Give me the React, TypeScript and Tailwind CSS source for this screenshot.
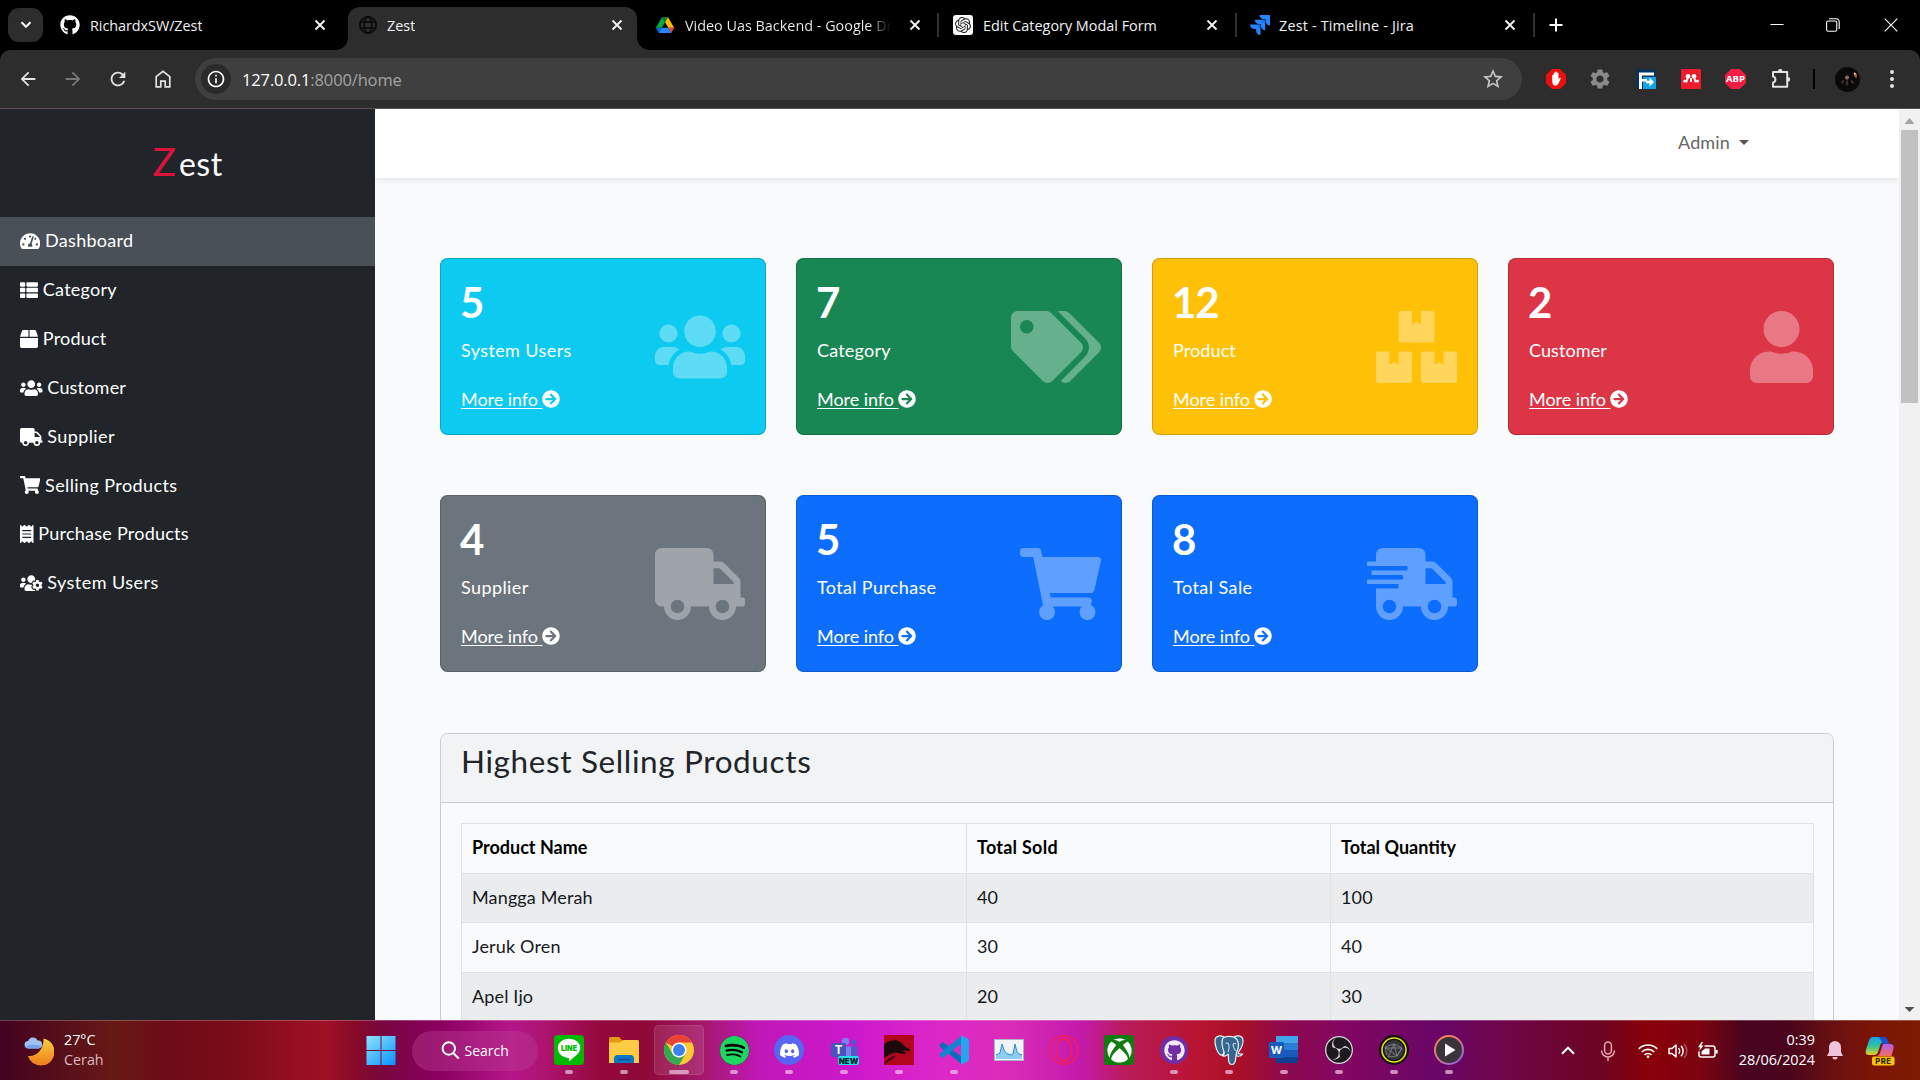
import type { ReactNode } from "react";
import type { IconType } from "react-icons";
import {
  FaArrowCircleRight,
  FaBox,
  FaBoxes,
  FaGithub,
  FaReceipt,
  FaShippingFast,
  FaShoppingCart,
  FaTachometerAlt,
  FaTags,
  FaThList,
  FaTruck,
  FaUser,
  FaUsers,
  FaUsersCog,
  FaXbox,
} from "react-icons/fa";
import {
  MdArrowBack,
  MdArrowForward,
  MdInfoOutline,
  MdRefresh,
  MdSettings,
  MdStarOutline,
} from "react-icons/md";
import { SiDiscord, SiObsstudio, SiOpenai, SiSpotify } from "react-icons/si";

/* ---------- Browser chrome ---------- */

function CloseX({ className }: { className: string }) {
  return (
    <svg viewBox="0 0 14 14" className={`h-[14px] w-[14px] shrink-0 ${className}`}>
      <path d="M2.5 2.5l9 9M11.5 2.5l-9 9" stroke="#f2f2f2" strokeWidth="1.9" fill="none" />
    </svg>
  );
}

function DriveIcon() {
  return (
    <svg viewBox="0 0 87.3 78" className="h-4 w-[18px] shrink-0">
      <path fill="#0066da" d="m6.6 66.85 3.85 6.65c.8 1.4 1.95 2.5 3.3 3.3l13.75-23.8h-27.5c0 1.55.4 3.1 1.2 4.5z" />
      <path fill="#00ac47" d="m43.65 25-13.75-23.8c-1.35.8-2.5 1.9-3.3 3.3l-25.4 44a9.06 9.06 0 0 0 -1.2 4.5h27.5z" />
      <path fill="#ea4335" d="m73.55 76.8c1.35-.8 2.5-1.9 3.3-3.3l1.6-2.75 7.65-13.25c.8-1.4 1.2-2.95 1.2-4.5h-27.502l5.852 11.5z" />
      <path fill="#00832d" d="m43.65 25 13.75-23.8c-1.35-.8-2.9-1.2-4.5-1.2h-18.5c-1.6 0-3.15.45-4.5 1.2z" />
      <path fill="#2684fc" d="m59.8 53h-32.3l-13.75 23.8c1.35.8 2.9 1.2 4.5 1.2h50.8c1.6 0 3.15-.45 4.5-1.2z" />
      <path fill="#ffba00" d="m73.4 26.5-12.7-22c-.8-1.4-1.95-2.5-3.3-3.3l-13.75 23.8 16.15 28h27.45c0-1.55-.4-3.1-1.2-4.5z" />
    </svg>
  );
}

function JiraIcon() {
  return (
    <svg viewBox="0 0 24 24" className="h-5 w-5 shrink-0">
      <g fill="#2684ff">
        <path d="M11.571 11.513H0a5.218 5.218 0 0 0 5.232 5.215h2.13v2.057A5.215 5.215 0 0 0 12.575 24V12.518a1.005 1.005 0 0 0-1.005-1.005z" />
        <path d="M17.294 5.757H5.736a5.215 5.215 0 0 0 5.215 5.214h2.129v2.058a5.218 5.218 0 0 0 5.215 5.214V6.758a1.001 1.001 0 0 0-1.001-1.001z" />
        <path d="M23.013 0H11.455a5.215 5.215 0 0 0 5.215 5.215h2.129v2.057A5.215 5.215 0 0 0 24 12.483V1.005A1.001 1.001 0 0 0 23.013 0Z" />
      </g>
      <path d="M8 12.5l4 4v-4zM13.5 6.8l4 4v-4z" fill="#0a5ad6" opacity=".6" />
    </svg>
  );
}

function TabTitle({ className, children }: { className: string; children: ReactNode }) {
  return <span className={`overflow-hidden pt-px whitespace-nowrap ${className}`}>{children}</span>;
}

function TabStrip() {
  return (
    <div className="flex h-[50px] items-center bg-black text-[14.4px] leading-5 text-[#f2f2f2]">
      <div className="ml-2 flex h-[34px] w-[35px] items-center justify-center rounded-[11px] bg-[#2d2d2d]">
        <svg viewBox="0 0 12 8" className="h-2 w-3">
          <path d="M1.5 1.2L6 5.8l4.5-4.6" stroke="#fff" strokeWidth="2" fill="none" />
        </svg>
      </div>
      <div className="flex w-[305px] items-center pr-[21px] pl-[17px]">
        <FaGithub className="h-5 w-5 shrink-0 text-white" />
        <TabTitle className="ml-2.5 tracking-[-0.05px]">RichardxSW/Zest</TabTitle>
        <CloseX className="ml-auto" />
      </div>
      <div className="relative flex h-[43px] w-[289px] items-center self-end rounded-t-[12px] bg-[#2d2d2d] pr-[13px] pb-[7px] pl-[11px]">
        <div className="absolute bottom-0 -left-3 h-3 w-3 bg-[radial-gradient(circle_at_0_0,#000_11.5px,#2d2d2d_12px)]" />
        <div className="absolute -right-3 bottom-0 h-3 w-3 bg-[radial-gradient(circle_at_100%_0,#000_11.5px,#2d2d2d_12px)]" />
        <svg viewBox="0 0 18 18" className="h-[18px] w-[18px] shrink-0" fill="none" stroke="#070707" strokeWidth="1.5">
          <circle cx="9" cy="9" r="8.2" />
          <ellipse cx="9" cy="9" rx="3.8" ry="8.2" />
          <path d="M1.5 6h15M1.5 12h15" />
        </svg>
        <TabTitle className="ml-2.5">Zest</TabTitle>
        <CloseX className="ml-auto" />
      </div>
      <div className="flex h-6 w-[302px] items-center border-r-2 border-[#2f2f2f] pr-[15px] pl-[19px]">
        <DriveIcon />
        <TabTitle className="ml-[11px] w-[209px] bg-linear-to-r from-[#f2f2f2] from-88% to-black bg-clip-text text-transparent">
          Video Uas Backend - Google Drive
        </TabTitle>
        <CloseX className="ml-auto" />
      </div>
      <div className="flex h-6 w-[298px] items-center border-r-2 border-[#2f2f2f] pr-[16px] pl-[14px]">
        <div className="flex h-5 w-5 shrink-0 items-center justify-center rounded-[3px] bg-white">
          <SiOpenai className="h-4 w-4 text-[#222]" />
        </div>
        <TabTitle className="ml-2.5">Edit Category Modal Form</TabTitle>
        <CloseX className="ml-auto" />
      </div>
      <div className="flex h-6 w-[298px] items-center border-r-2 border-[#2f2f2f] pr-[16px] pl-[13px]">
        <JiraIcon />
        <TabTitle className="ml-[9px] tracking-[0.18px]">Zest - Timeline - Jira</TabTitle>
        <CloseX className="ml-auto" />
      </div>
      <svg viewBox="0 0 14 14" className="ml-[14px] h-[14px] w-[14px]">
        <path d="M7 .5v13M.5 7h13" stroke="#fff" strokeWidth="2" />
      </svg>
      <div className="ml-auto flex items-center pr-[22px]">
        <svg viewBox="0 0 14 14" className="h-[14px] w-[14px]">
          <path d="M.5 6.5h13" stroke="#fff" strokeWidth="1" />
        </svg>
        <svg viewBox="0 0 14 14" className="ml-[42px] h-[14px] w-[14px]" fill="none" stroke="#fff" strokeWidth="1.1">
          <rect x=".6" y="3" width="10.2" height="10.3" rx="1.8" />
          <path d="M3 .8h7.2a3 3 0 0 1 3 3V11" />
        </svg>
        <svg viewBox="0 0 14 14" className="ml-11 h-[14px] w-[14px]">
          <path d="M.7.7l12.6 12.6M13.3.7L.7 13.3" stroke="#fff" strokeWidth="1.1" />
        </svg>
      </div>
    </div>
  );
}

function Cell({ children }: { children: ReactNode }) {
  return <div className="flex h-10 w-[45px] shrink-0 items-center justify-center">{children}</div>;
}

function Toolbar() {
  return (
    <div className="bg-black">
      <div className="flex h-[59px] items-center rounded-t-[10px] border-b border-[#5a5052] bg-[#2d2d2d] pl-[5px]">
        <Cell>
          <MdArrowBack className="h-[22px] w-[22px] text-[#e3e3e3]" />
        </Cell>
        <Cell>
          <MdArrowForward className="h-[22px] w-[22px] text-[#777]" />
        </Cell>
        <Cell>
          <MdRefresh className="h-[22px] w-[22px] text-[#e3e3e3]" />
        </Cell>
        <Cell>
          <svg viewBox="0 0 16 18" className="h-[18px] w-4" fill="none" stroke="#e3e3e3" strokeWidth="1.7">
            <path d="M1.2 16.8V6.6L8 1.4l6.8 5.2v10.2h-4.6v-5.6H5.8v5.6z" />
          </svg>
        </Cell>
        <div className="ml-2.5 flex h-[42px] w-[1327px] items-center rounded-full bg-[#3f3f3f] pr-[17px] pl-1.5">
          <div className="flex h-[30px] w-[30px] items-center justify-center rounded-full bg-[#2a2a2a]">
            <MdInfoOutline className="h-5 w-5 text-white" />
          </div>
          <span className="ml-[11px] pt-px text-[16.5px] leading-6 tracking-[-0.14px] text-white">
            127.0.0.1<span className="text-[#a3a3a3]">:8000/home</span>
          </span>
          <MdStarOutline className="ml-auto h-6 w-6 text-[#c8c8c8]" />
        </div>
        <div className="ml-[10.5px] flex">
          <Cell>
            <svg viewBox="0 0 20 20" className="ml-0.5 h-5 w-5">
              <path d="M6 0h8l6 6v8l-6 6H6l-6-6V6z" fill="#ef0d0d" />
              <path
                d="M6.2 11V6.200a.8.8 0 0 1 1.500 0V9V4.200a.8.8 0 0 1 1.600 0V9V3.200a.8.8 0 0 1 1.600 0V9V4.200a.8.8 0 0 1 1.600 0v6l1-1.200c.7-.7 1.600-.2 1.200.6l-2.200 5c-.8 1.600-1.800 2-3.200 2-2.400 0-3.100-2-3.100-5.600z"
                fill="#fff"
              />
            </svg>
          </Cell>
          <Cell>
            <MdSettings className="h-6 w-6 text-[#8a8a8a]" />
          </Cell>
          <Cell>
            <svg viewBox="0 0 20 20" className="ml-0.5 h-5 w-5">
              <rect width="20" height="20" rx="3" fill="#07325c" />
              <path d="M7 8h13v12H7z" fill="#14a5e6" />
              <path d="M3 3.5h15v3H6V10h5v2.500H6V20H3z" fill="#fff" />
              <path d="M10 11.800h3.500V8.500L18 13l-4.500 4.500v-3.300H10z" fill="#fff" />
            </svg>
          </Cell>
          <Cell>
            <svg viewBox="0 0 20 20" className="ml-px h-5 w-5">
              <path d="M0 0h20v20H0z" fill="#ec1c2c" />
              <g fill="#fff">
                <circle cx="7" cy="7.2" r="2.3" />
                <circle cx="13" cy="7.2" r="2.3" />
                <circle cx="3.6" cy="12.2" r="1.4" />
                <circle cx="16.4" cy="12.2" r="1.4" />
              </g>
              <path d="M5.600 13.300q-.3-3.300 1.800-4.300M14.400 13.300q.3-3.300-1.800-4.300M10 9v4" stroke="#fff" strokeWidth="1.9" fill="none" />
            </svg>
          </Cell>
          <Cell>
            <div className="ml-px flex h-5 w-[21px] items-center justify-center bg-[#f21d44] text-[9.5px] leading-none font-bold text-white [clip-path:polygon(30%_0,70%_0,100%_30%,100%_70%,70%_100%,30%_100%,0_70%,0_30%)]">
              ABP
            </div>
          </Cell>
          <Cell>
            <svg viewBox="0 0 22 22" className="ml-0.5 h-[22px] w-[22px]">
              <path
                d="M3 4h14.200v14.800H3v-4.300c3.200-.4 3.200-5.600 0-6z"
                fill="none"
                stroke="#e3e3e3"
                strokeWidth="2"
                strokeLinejoin="round"
              />
              <path d="M7.800 3.400a2.400 2.400 0 0 1 4.800 0zM17.800 9a2.400 2.400 0 0 1 0 4.800z" fill="#e3e3e3" />
            </svg>
          </Cell>
        </div>
        <div className="ml-2.5 h-5 w-0.5 bg-black" />
        <svg viewBox="0 0 26 26" className="ml-5 h-[25px] w-[25px] shrink-0 rounded-full bg-[#0b0909]">
          <circle cx="12.5" cy="11" r="2.2" fill="#8a6a5c" />
          <path d="M9.500 10a3 3 0 0 1 6 0V8h-6z" fill="#1d1412" />
          <path d="M7 17l2-3M19 17l-2-3M12.500 14v5" stroke="#5e463e" strokeWidth="1.300" />
          <path d="M20 5l3 3-1 4-2-3z" fill="#b6622f" />
          <circle cx="20.5" cy="7" r="1" fill="#f5dcc0" />
        </svg>
        <div className="ml-[9.5px]">
          <Cell>
            <div className="flex flex-col gap-[3px]">
              <div className="h-1 w-1 rounded-full bg-[#e3e3e3]" />
              <div className="h-1 w-1 rounded-full bg-[#e3e3e3]" />
              <div className="h-1 w-1 rounded-full bg-[#e3e3e3]" />
            </div>
          </Cell>
        </div>
      </div>
    </div>
  );
}

/* ---------- Web page ---------- */

const menu: { label: string; icon: IconType; size: string; tracking: string }[] = [
  { label: "Dashboard", icon: FaTachometerAlt, size: "w-[20.25px]", tracking: "tracking-[0.3px]" },
  { label: "Category", icon: FaThList, size: "w-[18px]", tracking: "tracking-[0.25px]" },
  { label: "Product", icon: FaBox, size: "w-[18px]", tracking: "tracking-[0.2px]" },
  { label: "Customer", icon: FaUsers, size: "w-[22.5px]", tracking: "tracking-[0.2px]" },
  { label: "Supplier", icon: FaTruck, size: "w-[22.5px]", tracking: "tracking-[0.4px]" },
  { label: "Selling Products", icon: FaShoppingCart, size: "w-[20.25px]", tracking: "tracking-[0.4px]" },
  { label: "Purchase Products", icon: FaReceipt, size: "w-[13.5px]", tracking: "tracking-[0.24px]" },
  { label: "System Users", icon: FaUsersCog, size: "w-[22.5px]", tracking: "tracking-[0.45px]" },
];

function Sidebar() {
  return (
    <aside className="w-[375px] shrink-0 bg-[#212529] text-white">
      <div className="flex h-[108px] items-baseline justify-center pt-[28px]">
        <span className="text-[39px] leading-[48px] text-[#dc143c]">Z</span>
        <span className="ml-[3px] text-[32px] leading-[48px] tracking-[0.5px]">est</span>
      </div>
      <nav>
        {menu.map(({ label, icon: Icon, size, tracking }, i) => (
          <a
            key={label}
            className={`flex h-[48.9px] items-center pb-px pl-5 ${i === 0 ? "bg-[#495057]" : ""}`}
          >
            <Icon className={`h-[18px] shrink-0 ${size}`} />
            <span className={`ml-[4.8px] pb-px text-[18px] leading-[28.8px] whitespace-nowrap ${tracking}`}>{label}</span>
          </a>
        ))}
      </nav>
    </aside>
  );
}

const stats: { value: string; label: string; icon: IconType; size: string; bg: string; tracking: string }[] = [
  { value: "5", label: "System Users", icon: FaUsers, size: "w-[90px]", bg: "bg-[#0dcaf0]", tracking: "tracking-[0.4px]" },
  { value: "7", label: "Category", icon: FaTags, size: "w-[90px]", bg: "bg-[#198754]", tracking: "tracking-[0.2px]" },
  { value: "12", label: "Product", icon: FaBoxes, size: "w-[81px]", bg: "bg-[#ffc107]", tracking: "tracking-[0.1px]" },
  { value: "2", label: "Customer", icon: FaUser, size: "w-[63px]", bg: "bg-[#dc3545]", tracking: "tracking-[0.1px]" },
  { value: "4", label: "Supplier", icon: FaTruck, size: "w-[90px]", bg: "bg-[#6c757d]", tracking: "tracking-[0.4px]" },
  { value: "5", label: "Total Purchase", icon: FaShoppingCart, size: "w-[81px]", bg: "bg-[#0d6efd]", tracking: "tracking-[0.35px]" },
  { value: "8", label: "Total Sale", icon: FaShippingFast, size: "w-[90px]", bg: "bg-[#0d6efd]", tracking: "tracking-[0.45px]" },
];

function StatCards() {
  return (
    <div className="grid w-[1394px] grid-cols-4 gap-x-[30px] gap-y-[60px]">
      {stats.map(({ value, label, icon: Icon, size, bg, tracking }) => (
        <div
          key={label}
          className={`flex h-[177px] items-center justify-between rounded-[7.5px] border border-black/[.176] bg-clip-border pr-5 pl-5 text-white ${bg}`}
        >
          <div className="flex h-full flex-col items-start pt-[17.5px]">
            <div className="-ml-px text-[42px] leading-[50px] font-bold tracking-[-1px]">{value}</div>
            <div className={`mt-[9.6px] text-[18px] leading-[28.8px] ${tracking}`}>{label}</div>
            <a className="mt-5 flex items-center text-[18px] leading-[28.8px]">
              <span className="tracking-[-0.05px] whitespace-pre underline decoration-1 underline-offset-2">More info </span>
              <FaArrowCircleRight className="h-[18px] w-[18px]" />
            </a>
          </div>
          <Icon className={`h-[72px] text-white/[.34] ${size}`} />
        </div>
      ))}
    </div>
  );
}

const sales = [
  { name: "Mangga Merah", sold: "40", qty: "100", row: "h-[49px] bg-[#ebecee]" },
  { name: "Jeruk Oren", sold: "30", qty: "40", row: "h-[50px]" },
  { name: "Apel Ijo", sold: "20", qty: "30", row: "h-[50px] bg-[#ebecee]" },
];

const cell = "border border-[#dee2e6] px-[10px] pb-[3px]";

function SalesTable() {
  return (
    <section className="mt-[61px] h-[400px] w-[1394px] rounded-[7.5px] border border-[#c9ccce]">
      <header className="h-[69px] rounded-t-[7px] border-b border-[#c9ccce] bg-[#f1f3f5] pt-2 pl-5">
        <h3 className="text-[31.5px] leading-[38px] tracking-[0.62px] text-[#212529]">Highest Selling Products</h3>
      </header>
      <table className="mt-5 ml-5 w-[1352px] table-fixed border-collapse text-left text-[18px] leading-6 text-black">
        <colgroup>
          <col className="w-[505px]" />
          <col className="w-[364px]" />
          <col className="w-[483px]" />
        </colgroup>
        <thead>
          <tr className="h-[50px] font-bold">
            <th className={cell}>Product Name</th>
            <th className={`tracking-[0.25px] ${cell}`}>Total Sold</th>
            <th className={cell}>Total Quantity</th>
          </tr>
        </thead>
        <tbody>
          {sales.map((s) => (
            <tr key={s.name} className={`tracking-[0.15px] text-[#16191c] ${s.row}`}>
              <td className={cell}>{s.name}</td>
              <td className={cell}>{s.sold}</td>
              <td className={cell}>{s.qty}</td>
            </tr>
          ))}
        </tbody>
      </table>
    </section>
  );
}

function Scrollbar() {
  return (
    <div className="flex w-[21px] shrink-0 flex-col items-center bg-[#f1f1f1]">
      <div className="mt-[9px] h-[6px] w-[10px] bg-[#a3a3a3] [clip-path:polygon(50%_0,100%_100%,0_100%)]" />
      <div className="mt-[6px] h-[273px] w-[17px] bg-[#c1c1c1]" />
      <div className="mt-auto mb-[8px] h-[5px] w-[10px] bg-[#505050] [clip-path:polygon(0_0,100%_0,50%_100%)]" />
    </div>
  );
}

function WebPage() {
  return (
    <div className="flex h-[911px] overflow-hidden bg-[#f8fafc] font-[Lato,sans-serif]">
      <Sidebar />
      <main className="min-w-0 flex-1 overflow-hidden">
        <div className="flex h-[69px] items-center justify-end bg-white pr-[150px] pb-0.5 shadow-[0_2.5px_5px_rgba(0,0,0,0.075)]">
          <span className="pb-px text-[18px] leading-7 tracking-[0.15px] text-[#666]">Admin</span>
          <span className="ml-[9px] h-[5px] w-[10px] bg-[#555] [clip-path:polygon(0_0,100%_0,50%_100%)]" />
        </div>
        <div className="pt-20 pl-[65px]">
          <StatCards />
          <SalesTable />
        </div>
      </main>
      <Scrollbar />
    </div>
  );
}

/* ---------- Taskbar ---------- */

function TaskbarApp({ children, mark = "dot", active = false }: { children?: ReactNode; mark?: "dot" | "bar" | "none"; active?: boolean }) {
  return (
    <div className="flex h-[59px] w-[55px] shrink-0 justify-center pt-1">
      <div
        className={`flex h-[50px] w-[50px] flex-col items-center pt-[10px] ${active ? "rounded-[5px] bg-white/10 ring-1 ring-white/10 ring-inset" : ""}`}
      >
        <div className="flex h-[30px] w-[30px] items-center justify-center">{children}</div>
        {mark !== "none" && (
          <div className={`mt-[5px] h-1 shrink-0 rounded-full bg-[#efc8e6]/70 ${mark === "bar" ? "w-5" : "w-2"}`} />
        )}
      </div>
    </div>
  );
}

function WeatherIcon() {
  return (
    <svg viewBox="0 0 30 30" className="h-[30px] w-[30px]">
      <defs>
        <linearGradient id="moon" x1="0" y1="0" x2="0" y2="1">
          <stop offset="0" stopColor="#f8cf3e" />
          <stop offset="1" stopColor="#f07c1c" />
        </linearGradient>
      </defs>
      <path d="M19.500 2.500a13.600 13.600 0 1 1-15.500 17.500c9 1 16-7 15.500-17.500z" fill="url(#moon)" />
      <path d="M4.500 12.500a3.800 3.800 0 0 1-.3-7.600A5 5 0 0 1 13.500 4.500a4 4 0 0 1 1.300 8z" fill="#9cc3f5" />
      <path d="M2 10.800c3-3 10-2 15.500-.8a4 4 0 0 1-2.700 2.500H4.500A4 4 0 0 1 2 10.800z" fill="#7a9fe6" />
    </svg>
  );
}

function ElephantIcon() {
  return (
    <svg viewBox="0 0 30 30" className="h-[30px] w-[30px] overflow-visible" fill="#336791" stroke="#f3f3f8" strokeWidth="1.2" strokeLinejoin="round">
      <path d="M20 2c3-2 7.500-1.500 8.700 1.500 1.200 3.500-1.500 10-4.700 14.500.8 1.500 3 1 4.700 1-1.200 1.800-4 2.500-6 2z" />
      <path d="M10 2C6.500.2 2 .5 1 4.500.5 9 3 18 6.500 20c2 .8 3.500-2 4.500-3.500z" />
      <path d="M8.500 4c2-3.500 12-4.200 15 1.500 1.500 3.500 1 8-1 12l-.8 6c-.3 4-1.300 6-3.700 6s-3.300-2-3.400-4.500L14.200 19c-2 2.500-5 2.500-6.200 1.500 3-1 2.500-2.500 1.500-5C8 11 7.500 7 8.500 4z" />
      <path d="M11.500 8.500q1.500-1.500 3 0c.8 3 .8 6-.5 8.500M22 9q-2-1.300-3 0c0 3 1.500 4.500 2.500 7" fill="none" strokeWidth=".9" />
    </svg>
  );
}

function Taskbar() {
  return (
    <div className="flex h-[60px] items-center border-t border-white/25 bg-[linear-gradient(90deg,#430220_0px,#671914_115px,#6d0c18_165px,#7a0c18_230px,#a01024_326px,#860a28_355px,#780640_385px,#8a0060_440px,#b5168a_510px,#ad1470_545px,#94083c_600px,#8e0838_645px,#a31868_700px,#c018b8_760px,#cc18cc_850px,#dc28c8_940px,#da2cb8_1010px,#c41aac_1080px,#b81c5a_1125px,#b81430_1200px,#a81028_1240px,#8c0850_1290px,#840660_1340px,#680668_1440px,#70064a_1500px,#6c0422_1600px,#8a0008_1650px,#7c0410_1700px,#480420_1745px,#4a041c_1790px,#681010_1830px,#7c1408_1870px,#7c1c00_1920px)] text-white">
      <div className="ml-6">
        <WeatherIcon />
      </div>
      <div className="ml-[10px] w-[289.5px] pb-[2px] text-[14.3px] leading-[20px]">
        <div>27°C</div>
        <div className="text-[#dfb9c0]">Cerah</div>
      </div>
      <TaskbarApp mark="none">
        <svg viewBox="0 0 30 30" className="h-[30px] w-[30px]">
          <defs>
            <linearGradient id="win" gradientUnits="userSpaceOnUse" x1="2" y1="0" x2="28" y2="30">
              <stop offset="0" stopColor="#8fe4ff" />
              <stop offset="1" stopColor="#0a94fb" />
            </linearGradient>
          </defs>
          <path d="M.5 1h14v14H.5zM15.5 1h14v14h-14zM.5 16h14v14H.5zM15.5 16h14v14h-14z" fill="url(#win)" />
        </svg>
      </TaskbarApp>
      <div className="mr-1 ml-[3px] flex h-10 w-[126px] items-center rounded-full bg-[#b93a90]/45 pl-[29px]">
        <svg viewBox="0 0 19 19" className="h-[19px] w-[19px]" fill="none" stroke="#fff" strokeWidth="2">
          <circle cx="7.8" cy="7.5" r="6.2" />
          <path d="M12.2 12l5.5 5.5" />
        </svg>
        <span className="ml-[5px] text-[14px] leading-5">Search</span>
      </div>
      <TaskbarApp>
        <svg viewBox="0 0 30 30" className="h-[30px] w-[30px] shrink-0">
          <rect width="30" height="30" rx="4" fill="#00b900" />
          <path d="M15 3.800c6.300 0 11.300 4.100 11.300 9.200 0 5-6 9-10.300 12.700-1.200.8-1.300.2-1.100-.9l.2-1.900C8.500 22.700 3.800 18.500 3.800 13c0-5.100 4.900-9.200 11.200-9.200z" fill="#fff" />
          <text x="15" y="16" textAnchor="middle" fontSize="7.2" fontWeight="900" fill="#00b900" fontFamily="Inter, sans-serif">
            LINE
          </text>
        </svg>
      </TaskbarApp>
      <TaskbarApp>
        <svg viewBox="0 0 30 30" className="h-[30px] w-[30px]">
          <path d="M0 3.500A1.500 1.500 0 0 1 1.500 2H10l3 3v5H0z" fill="#e09a0e" />
          <path d="M0 7.500h11l3-2.500h14.500A1.500 1.500 0 0 1 30 6.500V28H0z" fill="#fecb45" />
          <path d="M5 28v-4.500A3.500 3.500 0 0 1 8.500 20h13a3.500 3.500 0 0 1 3.500 3.500V28z" fill="#0f76c9" />
          <path d="M8.500 24.500h13" stroke="#0a4f96" strokeWidth="1.5" />
        </svg>
      </TaskbarApp>
      <TaskbarApp mark="bar" active>
        <svg viewBox="0 0 30 30" className="h-[30px] w-[30px]">
          <circle cx="15" cy="15" r="15" fill="#fcc934" />
          <path d="M15 15L2 7.500A15 15 0 0 1 28 7.500H15z" fill="#ea4335" />
          <path d="M2 7.500A15 15 0 0 0 15 30l6.500-11.200L15 15l-6.500 3.700z" fill="#34a853" />
          <circle cx="15" cy="15" r="7.5" fill="#fff" />
          <circle cx="15" cy="15" r="6" fill="#3a80ee" />
        </svg>
      </TaskbarApp>
      <TaskbarApp>
        <div className="flex h-[29px] w-[29px] items-center justify-center rounded-full bg-black">
          <SiSpotify className="h-[29px] w-[29px] text-[#1ed760]" />
        </div>
      </TaskbarApp>
      <TaskbarApp>
        <div className="flex h-[30px] w-[30px] items-center justify-center rounded-full bg-[#5865f2]">
          <SiDiscord className="h-[19px] w-[19px]" />
        </div>
      </TaskbarApp>
      <TaskbarApp>
        <svg viewBox="0 0 30 30" className="h-[30px] w-[30px] shrink-0 overflow-visible">
          <circle cx="16.5" cy="6.5" r="3.7" fill="#7b83eb" />
          <circle cx="25" cy="7.5" r="2.7" fill="#5059c9" />
          <path d="M20 11.500h8.500V22H20z" fill="#5059c9" />
          <path d="M10 11.500h12V23H10z" fill="#7b83eb" />
          <rect x="2" y="8" width="15" height="14" rx="1.2" fill="#4a53bc" />
          <text x="9.5" y="19" textAnchor="middle" fontSize="11.5" fontWeight="700" fill="#fff" fontFamily="Inter, sans-serif">
            T
          </text>
          <rect x="9" y="21" width="21" height="9" rx="2" fill="#1fe0e6" />
          <text x="19.5" y="28.5" textAnchor="middle" fontSize="8" fontWeight="900" fill="#06222a" fontFamily="Inter, sans-serif">
            NEW
          </text>
        </svg>
      </TaskbarApp>
      <TaskbarApp>
        <svg viewBox="0 0 30 30" className="h-[30px] w-[30px]">
          <rect width="30" height="30" fill="#b1061c" />
          <path d="M0 9c3-2 6-4 11-3.500L9 4.500c5 .5 9 3 12 7l5 3-1 2-4-1-3 .5 4 1.500-1 1.500c-4 0-7-1-9-1.500-4 0-7 3-12 5.500z" fill="#1c090c" />
          <path d="M0 28c4-5 9-6 12-9l-2 4c-3 1-7 5-9 6z" fill="#3a0a10" />
        </svg>
      </TaskbarApp>
      <TaskbarApp>
        <svg viewBox="0 0 30 30" className="h-[30px] w-[30px]">
          <path d="M1 9.500l2-2q.8-.6 1.600 0L22.500 21.800V29L1.200 12q-1-1.200-.2-2.500z" fill="#0a6fb8" />
          <path d="M1 20.500l2 2q.8.600 1.600 0L22.500 8.200V1L1.200 18q-1 1.200-.2 2.500z" fill="#1186d0" />
          <path d="M22 .3l7 3.400q1 .5 1 1.600v19.400q0 1.100-1 1.600l-7 3.400z" fill="#24a6ee" />
        </svg>
      </TaskbarApp>
      <TaskbarApp mark="none">
        <svg viewBox="0 0 30 30" className="h-[30px] w-[30px]">
          <rect x=".5" y="4.5" width="29" height="21" fill="#eef4f8" stroke="#a9b6c2" />
          <path d="M2 24v-4l4-2 2-9 2 6 2 3 2 1 3 1 2-1 2-10 2 8 2 2 3 1v4z" fill="#8fcdf0" />
          <path d="M2 20l4-2 2-9 2 6 2 3 2 1 3 1 2-1 2-10 2 8 2 2 3 1" fill="none" stroke="#2a8fd0" />
        </svg>
      </TaskbarApp>
      <TaskbarApp mark="none">
        <svg viewBox="0 0 30 30" className="h-[30px] w-[30px]" fill="none" stroke="#fa1e4e" strokeWidth="1.2">
          <circle cx="15" cy="15" r="14.2" />
          <ellipse cx="15" cy="15" rx="7.5" ry="11.5" />
          <path d="M11 5.500c3-2.500 12 0 12 9.500s-9 12-12 9.500" />
        </svg>
      </TaskbarApp>
      <TaskbarApp mark="none">
        <div className="flex h-[30px] w-[30px] items-center justify-center rounded-[3px] bg-[#107c10]">
          <FaXbox className="h-[25px] w-[25px]" />
        </div>
      </TaskbarApp>
      <TaskbarApp>
        <div className="flex h-[28px] w-[28px] items-center justify-center rounded-full bg-[#6f2da8]">
          <FaGithub className="h-[21px] w-[21px] text-[#f3eaf8]" />
        </div>
      </TaskbarApp>
      <TaskbarApp>
        <ElephantIcon />
      </TaskbarApp>
      <TaskbarApp>
        <svg viewBox="0 0 30 30" className="h-[30px] w-[30px] overflow-visible">
          <path d="M7 1h22v7H7z" fill="#41a5ee" />
          <path d="M7 8h22v7H7z" fill="#2b7cd3" />
          <path d="M7 15h22v7H7z" fill="#185abd" />
          <path d="M7 22h22v6H7z" fill="#103f91" />
          <rect x="0" y="7" width="15" height="16" rx="1.2" fill="#185abd" />
          <text x="7.5" y="18.8" textAnchor="middle" fontSize="11" fontWeight="700" fill="#fff" fontFamily="Inter, sans-serif">
            W
          </text>
        </svg>
      </TaskbarApp>
      <TaskbarApp>
        <div className="flex h-[28px] w-[28px] items-center justify-center rounded-full bg-[#1c1a1e]">
          <SiObsstudio className="h-[28px] w-[28px] text-[#dcd8de]" />
        </div>
      </TaskbarApp>
      <TaskbarApp>
        <svg viewBox="0 0 30 30" className="h-[30px] w-[30px]" fill="none">
          <circle cx="15" cy="15" r="15" fill="#15130f" />
          <circle cx="15" cy="15" r="12" stroke="#e9e414" strokeWidth="1.6" />
          <circle cx="15" cy="15" r="10" fill="#35373a" />
          <path d="M6 12l9-3 8 4-5 8-9 1 6-13 3 12M8 20L6 12l12 9 5-8-17 0" stroke="#8c9196" strokeWidth=".7" />
        </svg>
      </TaskbarApp>
      <TaskbarApp>
        <svg viewBox="0 0 30 30" className="h-[30px] w-[30px]">
          <defs>
            <linearGradient id="media" x1="0" y1="0" x2=".8" y2="1">
              <stop offset="0" stopColor="#ff8a3c" />
              <stop offset=".5" stopColor="#e0728a" />
              <stop offset="1" stopColor="#8a6ae0" />
            </linearGradient>
          </defs>
          <circle cx="15" cy="15" r="15" fill="url(#media)" />
          <circle cx="15" cy="15" r="13" fill="#38343a" />
          <path d="M11 8.500L21.500 15 11 21.500z" fill="#fff" />
        </svg>
      </TaskbarApp>
      <div className="ml-auto flex items-center pr-[25px]">
        <svg viewBox="0 0 14 9" className="h-[9px] w-[14px]">
          <path d="M1 7.700L7 1.700l6 6" stroke="#fff" strokeWidth="2" fill="none" />
        </svg>
        <svg viewBox="0 0 16 20" className="ml-[25px] h-5 w-4" fill="none" stroke="#e3a9b8" strokeWidth="1.5">
          <rect x="4.6" y="1" width="6.8" height="12" rx="3.4" />
          <path d="M1.500 9.500a6.500 6.500 0 0 0 13 0M8 16v4" />
        </svg>
        <svg viewBox="0 0 20 16" className="ml-[22px] h-4 w-5" fill="none" stroke="#fff" strokeWidth="1.7">
          <path d="M.8 5.800a13 13 0 0 1 18.400 0M3.800 9a8.800 8.800 0 0 1 12.400 0M6.600 11.900a4.800 4.800 0 0 1 6.800 0" />
          <circle cx="10" cy="13.8" r="1.3" fill="#fff" stroke="none" />
        </svg>
        <svg viewBox="0 0 20 16" className="ml-[10px] h-4 w-5" fill="none" stroke="#fff" strokeWidth="1.5">
          <path d="M1 5.500h3L8 2v12L4 10.500H1z" strokeLinejoin="round" />
          <path d="M10.500 5.200a4 4 0 0 1 0 5.600M13 2.800a7.400 7.400 0 0 1 0 10.400" />
          <path d="M16 1a10 10 0 0 1 0 14" stroke="#a8545c" />
        </svg>
        <svg viewBox="0 0 20 17" className="ml-[10px] h-[17px] w-5" fill="none" stroke="#fff" strokeWidth="1.5">
          <path d="M6.500 4h8.300A2.200 2.200 0 0 1 17 6.200v6.600a2.200 2.200 0 0 1-2.200 2.200H3.200A2.200 2.200 0 0 1 1 12.800V9.500" />
          <path d="M18.700 8v3.500" strokeWidth="2" />
          <path d="M3.500 12.500V9.500L7 6.500h4.500v6z" fill="#fff" stroke="none" />
          <path d="M3.500 0L0 5.200h2.200L1.200 9 5.500 3.500H3.200L5 0z" fill="#fff" stroke="none" />
        </svg>
        <div className="mr-px ml-[17px] w-[80px] pb-[2px] text-right text-[14.4px] leading-5 tracking-[-0.01px]">
          <div>0:39</div>
          <div>28/06/2024</div>
        </div>
        <svg viewBox="0 0 16 19" className="ml-[11px] h-[19px] w-4" fill="#f0c4dc">
          <path d="M8 0a6 6 0 0 1 6 6v5l2 4H0l2-4V6a6 6 0 0 1 6-6zM5.500 16h5a2.500 2.500 0 0 1-5 0z" />
        </svg>
        <svg viewBox="0 0 30 30" className="ml-[22px] h-[30px] w-[30px]">
          <defs>
            <linearGradient id="copA" x1="0" y1="0" x2="0" y2="1">
              <stop offset="0" stopColor="#1a9fe8" />
              <stop offset=".5" stopColor="#2ec4a0" />
              <stop offset="1" stopColor="#e8d020" />
            </linearGradient>
            <linearGradient id="copB" x1="0" y1="0" x2="0" y2="1">
              <stop offset="0" stopColor="#b25cf0" />
              <stop offset="1" stopColor="#f0705a" />
            </linearGradient>
          </defs>
          <path d="M8 1h10l4 6-6 0-3 9q-1 3-4 3H4q-4 0-3.200-4.500L4 4.500Q5 1 8 1z" fill="url(#copA)" />
          <path d="M14 1h5q3 0 4 4l1 3h-6z" fill="#1c50c8" />
          <path d="M18 8h7q4.500 0 3.500 4.500L26.500 20H12q2 0 3-3z" fill="url(#copB)" />
          <rect x="7" y="20.5" width="22.5" height="9" rx="2" fill="#fbc40a" />
          <text x="18.3" y="27.8" textAnchor="middle" fontSize="7.6" fontWeight="800" letterSpacing=".5" fill="#2a1e00" fontFamily="Inter, sans-serif">
            PRE
          </text>
        </svg>
      </div>
    </div>
  );
}

export default function App() {
  return (
    <div className="h-[1080px] w-[1920px] overflow-hidden font-['Open_Sans',sans-serif]">
      <TabStrip />
      <Toolbar />
      <WebPage />
      <Taskbar />
    </div>
  );
}
